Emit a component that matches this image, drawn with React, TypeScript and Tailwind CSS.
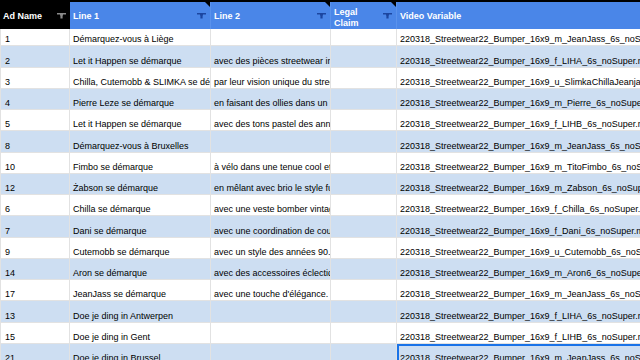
const rows = [
  { id: "1", line1: "Démarquez-vous à Liège", line2: "", video: "220318_Streetwear22_Bumper_16x9_m_JeanJass_6s_noSuper.mp4" },
  { id: "2", line1: "Let it Happen se démarque", line2: "avec des pièces streetwear inspirées", video: "220318_Streetwear22_Bumper_16x9_f_LIHA_6s_noSuper.mp4" },
  { id: "3", line1: "Chilla, Cutemobb & SLIMKA se démarquent", line2: "par leur vision unique du streetwear", video: "220318_Streetwear22_Bumper_16x9_u_SlimkaChillaJeanjass_6s_noSuper.mp4" },
  { id: "4", line1: "Pierre Leze se démarque", line2: "en faisant des ollies dans un lieu", video: "220318_Streetwear22_Bumper_16x9_m_Pierre_6s_noSuper.mp4" },
  { id: "5", line1: "Let it Happen se démarque", line2: "avec des tons pastel des années 90", video: "220318_Streetwear22_Bumper_16x9_f_LIHB_6s_noSuper.mp4" },
  { id: "8", line1: "Démarquez-vous à Bruxelles", line2: "", video: "220318_Streetwear22_Bumper_16x9_m_JeanJass_6s_noSuper.mp4" },
  { id: "10", line1: "Fimbo se démarque", line2: "à vélo dans une tenue cool et décontractée", video: "220318_Streetwear22_Bumper_16x9_m_TitoFimbo_6s_noSuper.mp4" },
  { id: "12", line1: "Żabson se démarque", line2: "en mêlant avec brio le style futuriste", video: "220318_Streetwear22_Bumper_16x9_m_Zabson_6s_noSuper.mp4" },
  { id: "6", line1: "Chilla se démarque", line2: "avec une veste bomber vintage", video: "220318_Streetwear22_Bumper_16x9_f_Chilla_6s_noSuper.mp4" },
  { id: "7", line1: "Dani se démarque", line2: "avec une coordination de couleurs", video: "220318_Streetwear22_Bumper_16x9_f_Dani_6s_noSuper.mp4" },
  { id: "9", line1: "Cutemobb se démarque", line2: "avec un style des années 90.", video: "220318_Streetwear22_Bumper_16x9_u_Cutemobb_6s_noSuper.mp4" },
  { id: "14", line1: "Aron se démarque", line2: "avec des accessoires éclectiques", video: "220318_Streetwear22_Bumper_16x9_m_Aron6_6s_noSuper.mp4" },
  { id: "17", line1: "JeanJass se démarque", line2: "avec une touche d'élégance.", video: "220318_Streetwear22_Bumper_16x9_m_JeanJass_6s_noSuper.mp4" },
  { id: "13", line1: "Doe je ding in Antwerpen", line2: "", video: "220318_Streetwear22_Bumper_16x9_f_LIHA_6s_noSuper.mp4" },
  { id: "15", line1: "Doe je ding in Gent", line2: "", video: "220318_Streetwear22_Bumper_16x9_f_LIHB_6s_noSuper.mp4" },
  { id: "21", line1: "Doe je ding in Brussel", line2: "", video: "220318_Streetwear22_Bumper_16x9_m_JeanJass_6s_noSuper.mp4" },
];

function FilterIcon({ className }: { className: string }) {
  return (
    <svg width="9" height="6" viewBox="0 0 9 6" className={className}>
      <path d="M0 0H9V1.6H6V2.6H5.6V5.4H3.4V2.6H3V1.6H0Z" fill="currentColor" />
    </svg>
  );
}

function NoteMark() {
  return (
    <span className="absolute right-0 top-0 h-0 w-0 border-t-[5px] border-l-[5px] border-t-black border-l-transparent" />
  );
}

function HeaderCell({
  label,
  dark,
  note,
  filter = true,
  twoLine,
}: {
  label: React.ReactNode;
  dark?: boolean;
  note?: boolean;
  filter?: boolean;
  twoLine?: boolean;
}) {
  return (
    <div
      className={`relative flex items-center justify-between pl-[3px] pr-[4px] ${
        dark ? "bg-black" : "bg-[#4a86e8] border-r border-[#5a92ec]"
      }`}
    >
      <span
        className={`text-[9px] font-bold text-white ${
          twoLine ? "mt-[5px] leading-[11px]" : "mt-[1px] leading-[10px]"
        }`}
      >
        {label}
      </span>
      {filter && (
        <FilterIcon className={dark ? "text-[#8a8a8a]" : "text-[#1c46a0]"} />
      )}
      {note && <NoteMark />}
    </div>
  );
}

function Cell({ children, selected }: { children?: React.ReactNode; selected?: boolean }) {
  return (
    <div
      className={`flex items-end overflow-hidden whitespace-nowrap border-r border-b border-[#e2e2e2] pb-[1px] pl-[3px] ${
        selected ? "outline-2 -outline-offset-2 outline-[#1a73e8]" : ""
      }`}
    >
      <span className="text-[9px] leading-[10px] text-black">{children}</span>
    </div>
  );
}

export default function App() {
  return (
    <div
      className="h-[360px] w-[640px] overflow-hidden bg-white"
      style={{ fontFamily: '"Liberation Sans", Arial, sans-serif' }}
    >
      <div className="grid grid-cols-[70px_141px_120px_66px_300px] border-t-2 border-black">
        <div className="grid h-[23px] grid-cols-subgrid col-span-5">
          <HeaderCell label="Ad Name" dark />
          <HeaderCell label="Line 1" note />
          <HeaderCell label="Line 2" note />
          <HeaderCell
            label={
              <>
                Legal
                <br />
                Claim
              </>
            }
            note
            twoLine
          />
          <HeaderCell label="Video Variable" filter={false} />
        </div>
        {rows.map((row, i) => (
          <div
            key={i}
            className={`grid h-[21.25px] grid-cols-subgrid col-span-5 ${
              i % 2 === 1 ? "bg-[#cddef2]" : "bg-white"
            }`}
          >
            <div className="flex items-end border-r border-b border-l border-[#e2e2e2] pb-[1px] pl-[4px]">
              <span className="text-[9px] leading-[10px] text-black">{row.id}</span>
            </div>
            <Cell>{row.line1}</Cell>
            <Cell>{row.line2}</Cell>
            <Cell />
            <Cell selected={i === rows.length - 1}>{row.video}</Cell>
          </div>
        ))}
      </div>
    </div>
  );
}
